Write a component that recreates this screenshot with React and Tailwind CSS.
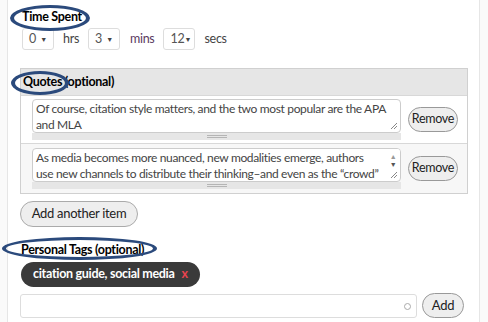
import React from 'react';

const Oval = ({ className }) => (
  <div className={`absolute rounded-[50%] border-y-[3px] border-x-[4px] border-[#2b4a7c] pointer-events-none ${className}`} />
);

const FakeSelect = ({ value, width }) => (
  <div className={`flex items-center justify-between h-[22px] ${width} pl-[6px] pr-[6px] border border-[#ddd] rounded-[3px] bg-white text-[#555]`}>
    <span>{value}</span>
    <span className="text-[7px] text-[#444]">▼</span>
  </div>
);

const Grip = () => (
  <div className="h-[7px] bg-[#e6e6e6] flex items-center justify-center">
    <div className="w-[20px] flex flex-col gap-[1px]">
      <div className="h-px bg-[#b5b5b5]" />
      <div className="h-px bg-[#b5b5b5]" />
    </div>
  </div>
);

const ResizeCorner = () => (
  <svg className="absolute right-[2px] bottom-[2px]" width="8" height="8" viewBox="0 0 8 8">
    <path d="M7 1 L1 7 M7 4 L4 7" stroke="#888" strokeWidth="1" />
  </svg>
);

const RemoveButton = () => (
  <button className="h-[25px] w-[50px] rounded-full border border-[#999] bg-[#eee] text-[#222] text-[12.5px] tracking-[-0.3px]">
    Remove
  </button>
);

const App = () => {
  return (
    <div className="w-[488px] h-[322px] bg-[#fafafa] overflow-hidden relative" style={{ fontFamily: 'Lato, sans-serif' }}>
      <div className="ml-[7px] w-[473px] h-[322px] bg-white border-x border-[#e6e6e6] pl-[12px] pr-[11px] text-[12.5px] tracking-[-0.3px] text-[#333]">
        {/* Time spent */}
        <div className="pt-[8px] font-bold text-black leading-[18px] pl-[2px]">Time Spent</div>
        <div className="flex items-center mt-[2px] pl-[2px] text-[#444]">
          <FakeSelect value="0" width="w-[32px]" />
          <span className="ml-[9px] mr-[9px]">hrs</span>
          <FakeSelect value="3" width="w-[32px]" />
          <span className="ml-[10px] mr-[9px] text-[#5a3a5e]">mins</span>
          <FakeSelect value="12" width="w-[32px]" />
          <span className="ml-[9px]">secs</span>
        </div>

        {/* Quotes */}
        <div className="mt-[18px] border border-[#d0d0d0]">
          <div className="h-[26px] bg-[#e6e6e6] flex items-center pl-[2px] font-bold text-black">Quotes (optional)</div>
          <div className="flex items-center h-[48px] border-t border-[#d8d8d8] bg-white pl-[11px] pr-[9px]">
            <div className="w-[369px]">
              <div className="relative h-[34px] border border-[#ccc] rounded-[4px] bg-white pl-[3px] pr-[2px] pt-[1px] text-[12px] leading-[16px] tracking-[-0.35px] text-[#444]">
                Of course, citation style matters, and the two most popular are the APA and MLA
                <ResizeCorner />
              </div>
              <Grip />
            </div>
            <div className="ml-auto">
              <RemoveButton />
            </div>
          </div>
          <div className="flex items-center h-[50px] border-t border-[#d8d8d8] bg-[#f7f7f7] pl-[11px] pr-[9px]">
            <div className="w-[369px]">
              <div className="relative h-[34px] border border-[#ccc] rounded-[4px] bg-white pl-[3px] pr-[14px] pt-[1px] text-[12px] leading-[16px] tracking-[-0.35px] text-[#444] overflow-hidden">
                <div className="whitespace-nowrap">As media becomes more nuanced, new modalities emerge, authors</div>
                <div className="whitespace-nowrap">use new channels to distribute their thinking–and even as the “crowd”</div>
                <div className="absolute right-0 top-0 w-[14px] h-[22px] bg-white flex flex-col items-center pt-[3px] text-[7px] leading-[8px] text-[#999]">
                  <span>▲</span>
                  <span className="text-[#555]">▼</span>
                </div>
                <ResizeCorner />
              </div>
              <Grip />
            </div>
            <div className="ml-auto">
              <RemoveButton />
            </div>
          </div>
        </div>

        <button className="mt-[7px] h-[26px] w-[118px] rounded-full border border-[#aaa] bg-[#eee] text-[13px] text-[#222]">
          Add another item
        </button>

        {/* Personal tags */}
        <div className="mt-[14px] font-bold text-black leading-[18px] pl-px">Personal Tags (optional)</div>
        <div className="mt-[3px] flex">
          <div className="h-[25px] ml-[1px] pl-[12px] pr-[12px] rounded-full bg-[#3a3a3a] text-white font-bold flex items-center gap-[7px]">
            <span>citation guide, social media</span>
            <span className="text-[#e8434f]">x</span>
          </div>
        </div>
        <div className="mt-[6px] flex items-center gap-[5px]">
          <div className="relative w-[397px] h-[24px] border border-[#ddd] rounded-[3px] bg-white">
            <div className="absolute right-[5px] top-[8px] w-[7px] h-[7px] rounded-full border border-[#aaa]" />
          </div>
          <button className="h-[25px] w-[42px] rounded-full border border-[#999] bg-[#eee] text-[13px] text-[#222]">Add</button>
        </div>
      </div>

      <Oval className="left-[10px] top-[5px] w-[80px] h-[26px]" />
      <Oval className="left-[11px] top-[71px] w-[58px] h-[24px]" />
      <Oval className="left-[2px] top-[237px] w-[155px] h-[23px]" />
    </div>
  );
};

export default App;
